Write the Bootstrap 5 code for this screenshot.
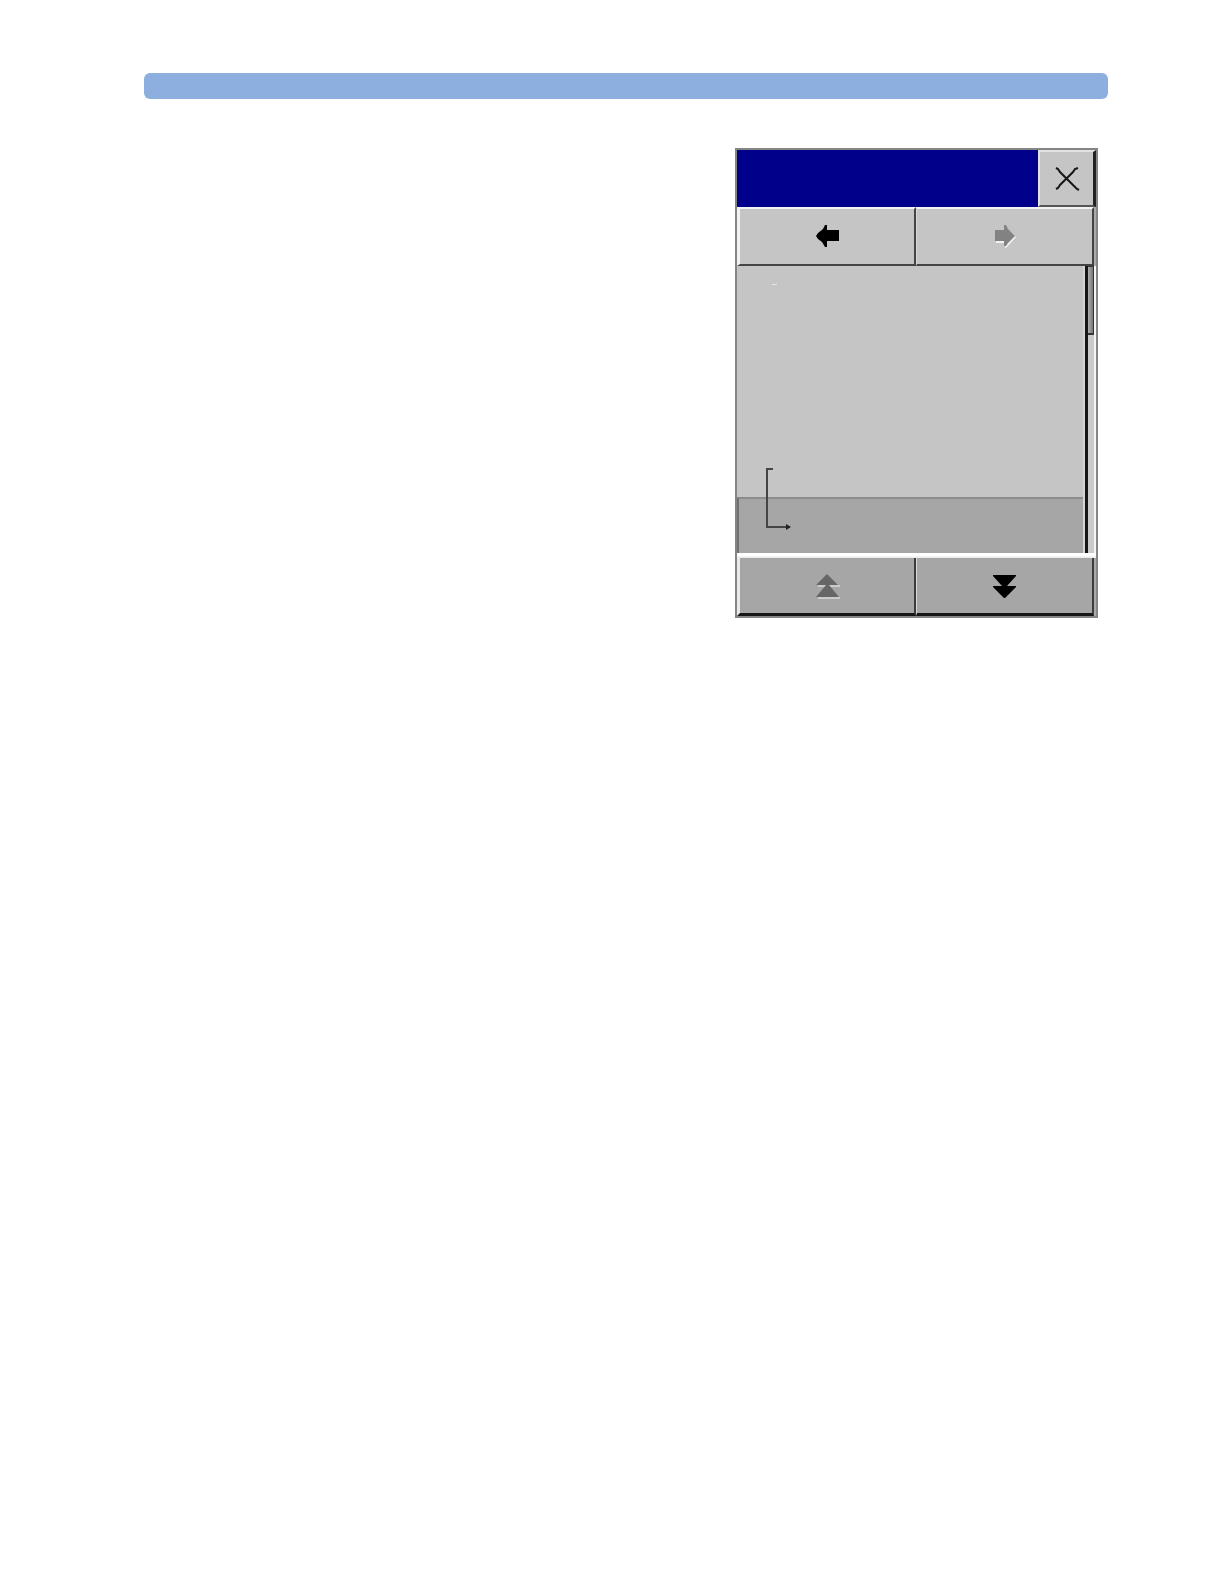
<!DOCTYPE html>
<html lang="en">
<head>
<meta charset="utf-8">
<meta name="viewport" content="width=device-width, initial-scale=1">
<title>Navigation window</title>
<link href="https://cdn.jsdelivr.net/npm/bootstrap@5.3.0/dist/css/bootstrap.min.css" rel="stylesheet">
<style>
body { background: #fff; font-family: "Liberation Sans", Arial, sans-serif; }
.sheet { padding: 73px 116px 73px 144px; }
.page-band { height: 26px; border-radius: 6px; background: #8cafdf; }
.panel-window { width: 363px; max-width: 100%; margin: 49px 10px 0 0; border: 2px solid #858585; background: #c5c5c5; }
.title-area { height: 57px; background: #00008a; }
.key { border: 0 solid; border-radius: 0; padding: 0; background: #c5c5c5; display: flex; align-items: center; justify-content: center; min-width: 0; }
.key:disabled { opacity: 1; }
.key svg { display: block; }
.key-close { width: 58px; border-width: 2px 3px 2px 2px; border-color: #e2e2e2 #222 #555 #e2e2e2; }
.key-row { padding-right: 2px; background: #aaa; }
.key-nav { height: 59px; border-width: 2px 2px 2px 3px; border-color: #f2f2f2 #444 #444 #f2f2f2; }
.key-page { height: 58px; background: #a6a6a6; border-width: 0 2px 3px 3px; border-color: #f2f2f2 #3c3c3c #161616 #eaeaea; }
.key-row .key + .key { border-left-width: 1px; border-left-color: #d6d6d6; }
.list-pane { height: 287px; border-right: 2px solid #d4d4d4; }
.list-selected { height: 56px; background: #a6a6a6; border-top: 2px solid #8c8c8c; border-left: 2px solid #707070; }
.branch { left: 22px; top: 15px; }
.scroll-track { width: 11px; background: #cacaca; border-left: 3px solid #161616; border-right: 2px solid #f4f4f4; }
.scroll-thumb { height: 69px; background: linear-gradient(90deg, #b0b0b0, #747474); border: solid #333; border-width: 1px 1px 2px 0; }
.ridge { height: 5px; background: linear-gradient(#fff 50%, #e6e6e6); }
</style>
</head>
<body>
<div class="sheet">
  <header class="page-band"></header>
  <main class="d-flex justify-content-end">
    <section class="panel-window" aria-label="Navigation window">
      <div class="d-flex">
        <div class="title-area flex-grow-1"></div>
        <button type="button" class="key key-close" aria-label="Close">
          <svg width="28" height="28" viewBox="0 0 28 28" fill="none" stroke="#171717" stroke-width="2"><path d="M3 3l2 1 2 3 14 14 3 3 2 1M25 3l-3 1-2 3-6 6-7 7-2 3-2 1"/></svg>
        </button>
      </div>
      <div class="key-row d-flex">
        <button type="button" class="key key-nav w-50" aria-label="Back">
          <svg width="26" height="26" viewBox="0 0 26 26"><path d="M2 12l2-3 5-4 2-4h2v5h12v11H13v6h-2l-3-5-4-3z" fill="#000"/></svg>
        </button>
        <button type="button" class="key key-nav w-50" aria-label="Forward" disabled>
          <svg width="26" height="26" viewBox="0 0 26 26"><path d="M5 8h9V3l11 10-9 10-2 1v-5H5z" fill="#f2f2f2"/><path d="M4 6h9V1h2l2 4 7 7-7 7-2 3h-2v-5H4z" fill="#828282"/></svg>
        </button>
      </div>
      <div class="d-flex">
        <div class="list-pane position-relative flex-grow-1 d-flex flex-column">
          <div class="flex-grow-1"></div>
          <div class="list-selected"></div>
          <svg class="branch position-absolute" width="40" height="254" viewBox="0 0 40 254" fill="none">
            <path d="M13 3.500h5" stroke="#e4e4e4"/>
            <path d="M14 188H8v58h21" stroke="#444" stroke-width="2"/>
            <path d="M27 243l5 3-5 3z" fill="#222"/>
          </svg>
        </div>
        <div class="scroll-track"><div class="scroll-thumb"></div></div>
      </div>
      <div class="ridge"></div>
      <div class="key-row d-flex">
        <button type="button" class="key key-page w-50" aria-label="Page up" disabled>
          <svg width="26" height="28" viewBox="0 0 26 28"><path d="M4 13h22v2H4zM4 25h22v2H4z" fill="#cbcbcb"/><path d="M13 2l11 11H15l10 12H2l10-12H2z" fill="#666"/></svg>
        </button>
        <button type="button" class="key key-page w-50" aria-label="Page down">
          <svg width="26" height="28" viewBox="0 0 26 28"><path d="M2 3h23v1l-9 10h9v1L14 26h-1L2 15v-1h9L2 4z" fill="#000"/></svg>
        </button>
      </div>
    </section>
  </main>
</div>
<script src="https://cdn.jsdelivr.net/npm/bootstrap@5.3.0/dist/js/bootstrap.bundle.min.js"></script>
</body>
</html>
